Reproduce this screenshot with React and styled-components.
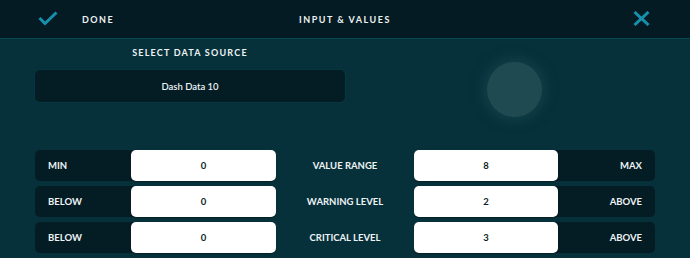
import React from 'react'
import styled, { createGlobalStyle } from 'styled-components'

const GlobalStyle = createGlobalStyle`
  html, body {
    margin: 0;
    padding: 0;
    background: #06303a;
    font-family: Lato, "Open Sans", sans-serif;
    -webkit-font-smoothing: antialiased;
  }
`

const rows = [
  { left: 'MIN', low: '0', mid: 'VALUE RANGE', high: '8', right: 'MAX' },
  { left: 'BELOW', low: '0', mid: 'WARNING LEVEL', high: '2', right: 'ABOVE' },
  { left: 'BELOW', low: '0', mid: 'CRITICAL LEVEL', high: '3', right: 'ABOVE' },
]

const App = () => {
  return (
    <Page>
      <GlobalStyle />
      <Header>
        <HeaderLeft>
          <svg width="20" height="15" viewBox="0 0 20 15">
            <path d="M1.5 7 L7 12.5 L18.5 1.5" fill="none" stroke="#1690ad" strokeWidth="3" />
          </svg>
          <HeaderText>DONE</HeaderText>
        </HeaderLeft>
        <HeaderText>INPUT &amp; VALUES</HeaderText>
        <HeaderRight>
          <svg width="17" height="15" viewBox="0 0 17 15">
            <path d="M1.5 1 L15.5 14 M15.5 1 L1.5 14" fill="none" stroke="#1690ad" strokeWidth="3" />
          </svg>
        </HeaderRight>
      </Header>
      <Body>
        <Top>
          <Source>
            <SectionLabel>SELECT DATA SOURCE</SectionLabel>
            <Dropdown>Dash Data 10</Dropdown>
          </Source>
          <Knob />
        </Top>
        <Grid>
          {rows.map((r, i) => (
            <React.Fragment key={i}>
              <Field>
                <FieldLabel>{r.left}</FieldLabel>
                <Input>{r.low}</Input>
              </Field>
              <MidLabel>{r.mid}</MidLabel>
              <Field>
                <Input>{r.high}</Input>
                <FieldLabel $right>{r.right}</FieldLabel>
              </Field>
            </React.Fragment>
          ))}
        </Grid>
      </Body>
    </Page>
  )
}

export default App

const Page = styled.div`
width: 690px;
height: 258px;
background: #06303a;
overflow: hidden;
`
const Header = styled.div`
height: 38px;
background: #041b23;
border-bottom: 1px solid #0c4650;
display: grid;
grid-template-columns: 1fr auto 1fr;
align-items: center;
`
const HeaderLeft = styled.div`
display: flex;
align-items: center;
gap: 24px;
padding-left: 38px;
svg { margin-top: -1px; }
`
const HeaderRight = styled.div`
display: flex;
justify-content: flex-end;
padding-right: 40px;
svg { margin-top: -1px; }
`
const HeaderText = styled.div`
color: #eef3f4;
font-size: 9px;
font-weight: 700;
letter-spacing: 1.5px;
`
const Body = styled.div`
padding: 0 35px;
`
const Top = styled.div`
display: flex;
align-items: flex-start;
`
const Source = styled.div`
width: 310px;
display: flex;
flex-direction: column;
align-items: center;
padding-top: 8px;
`
const SectionLabel = styled.div`
color: #eef3f4;
font-size: 9px;
font-weight: 700;
letter-spacing: 1.2px;
height: 23px;
line-height: 12px;
`
const Dropdown = styled.div`
width: 100%;
height: 32px;
border-radius: 5px;
background: #041c24;
box-shadow: 0 0 0 1px rgba(10, 60, 70, 0.5);
display: flex;
align-items: center;
justify-content: center;
color: #eef3f4;
font-size: 9.5px;
font-weight: 600;
`
const Knob = styled.div`
width: 55px;
height: 55px;
border-radius: 50%;
background: #1f4a51;
box-shadow: 0 0 14px 4px rgba(40, 95, 100, 0.35);
margin-left: 142px;
margin-top: 23px;
`
const Grid = styled.div`
margin-top: 33px;
display: grid;
grid-template-columns: 241px 1fr 241px;
grid-auto-rows: 31px;
row-gap: 5px;
`
const Field = styled.div`
display: flex;
height: 31px;
`
const FieldLabel = styled.div`
width: 105px;
flex: none;
background: #041c24;
border-radius: ${p => (p.$right ? '0 5px 5px 0' : '5px 0 0 5px')};
margin: ${p => (p.$right ? '0 0 0 -8px' : '0 -9px 0 0')};
display: flex;
align-items: center;
justify-content: ${p => (p.$right ? 'flex-end' : 'flex-start')};
padding: ${p => (p.$right ? '0 13px 0 0' : '0 0 0 13px')};
box-sizing: border-box;
color: #eef3f4;
font-size: 9.5px;
font-weight: 700;
`
const Input = styled.div`
flex: 1;
position: relative;
z-index: 1;
background: #ffffff;
border-radius: 5px;
box-shadow: 0 1px 1px rgba(0, 0, 0, 0.35);
display: flex;
align-items: center;
justify-content: center;
color: #0a1e24;
font-size: 9.5px;
font-weight: 700;
`
const MidLabel = styled.div`
display: flex;
align-items: center;
justify-content: center;
color: #eef3f4;
font-size: 9.5px;
font-weight: 700;
`
